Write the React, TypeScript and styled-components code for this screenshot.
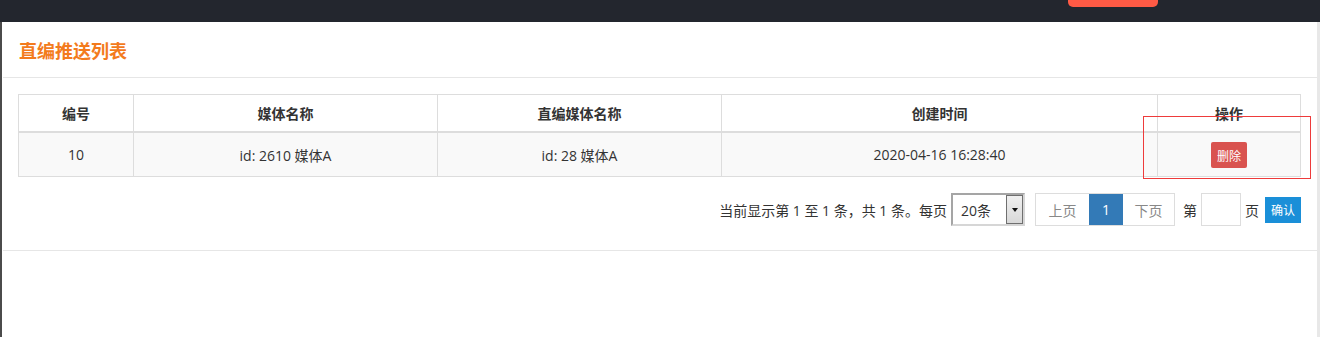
import styled, { createGlobalStyle } from "styled-components";

const GlobalStyle = createGlobalStyle`
  html, body {
    margin: 0;
    padding: 0;
    background: #fff;
  }
  body {
    font-family: "Open Sans", "Noto Sans CJK SC", sans-serif;
    color: #333;
  }
`;

const Page = styled.div`
  position: relative;
  width: 1320px;
  height: 337px;
  overflow: hidden;
  display: flex;
  flex-direction: column;
`;

const TopBar = styled.div`
  height: 22px;
  flex-shrink: 0;
  background: #23262e;
  display: flex;
  padding-left: 1068px;
  box-sizing: border-box;
`;

const TopTab = styled.div`
  width: 90px;
  height: 7px;
  background: #ff5a45;
  border-radius: 0 0 5px 5px;
`;

const Main = styled.div`
  flex: 1;
  display: flex;
  border-left: 2px solid #4b4b4b;
`;

const Panel = styled.div`
  flex: 1;
  padding-left: 1px;
  background: #fff;
`;

const ScrollStrip = styled.div`
  width: 4px;
  background: #e8e8e8;
`;

const PanelHeader = styled.div`
  height: 55px;
  display: flex;
  align-items: center;
  padding-left: 16px;
  border-bottom: 1px solid #e6e6e6;
`;

const Title = styled.h2`
  margin: 0;
  font-family: "Noto Sans CJK SC", sans-serif;
  font-size: 18px;
  font-weight: 700;
  color: #f37b1d;
  line-height: 1;
  margin-top: 1px;
`;

const PanelBody = styled.div`
  padding: 16px 16px 24px 15px;
  border-bottom: 1px solid #e6e6e6;
`;

const Table = styled.table`
  width: 100%;
  border-collapse: collapse;
  table-layout: fixed;
  border: 1px solid #ddd;
  font-size: 14px;
`;

const Th = styled.th`
  height: 36px;
  padding: 0 8px;
  border: 1px solid #ddd;
  border-bottom: 2px solid #ddd;
  font-weight: 700;
  font-family: "Noto Sans CJK SC", sans-serif;
  text-align: center;
  vertical-align: middle;
  color: #333;
`;

const Td = styled.td`
  height: 43px;
  padding: 0 8px;
  border: 1px solid #ddd;
  background: #f9f9f9;
  text-align: center;
  vertical-align: middle;
  color: #333;
`;

const DangerButton = styled.button`
  height: 26px;
  width: 36px;
  padding: 0;
  border: none;
  border-radius: 2px;
  background: #d9534f;
  color: #fff;
  font-size: 12px;
  font-family: "Noto Sans CJK SC", sans-serif;
  margin-top: 1px;
`;

const PagerRow = styled.div`
  margin-top: 16px;
  display: flex;
  justify-content: flex-end;
  align-items: center;
  height: 33px;
  font-size: 14px;
`;

const Info = styled.span`
  margin-right: 4px;
  color: #333;
`;

const SelectBox = styled.div`
  width: 74px;
  height: 33px;
  box-sizing: border-box;
  border: 2px solid #a5a5a5;
  border-right-color: #d6d6d6;
  border-bottom-color: #d6d6d6;
  display: flex;
  align-items: center;
  justify-content: space-between;
  padding-left: 8px;
  font-size: 14px;
  background: #fff;
`;

const SelectArrow = styled.div`
  width: 17px;
  height: 29px;
  box-sizing: border-box;
  border: 1px solid #6f6f6f;
  background: linear-gradient(#f0f0f0, #d8d8d8);
  display: flex;
  align-items: center;
  justify-content: center;
  &::after {
    content: "";
    border-left: 3px solid transparent;
    border-right: 3px solid transparent;
    border-top: 4px solid #111;
  }
`;

const PageList = styled.div`
  display: flex;
  margin-left: 10px;
  border: 1px solid #ddd;
  height: 33px;
  box-sizing: border-box;
`;

const PageItem = styled.span<{ $active?: boolean; $w: number }>`
  width: ${({ $w }) => $w}px;
  display: flex;
  align-items: center;
  justify-content: center;
  background: ${({ $active }) => ($active ? "#337ab7" : "#fff")};
  color: ${({ $active }) => ($active ? "#fff" : "#888")};
`;

const Label = styled.span<{ $tight?: boolean }>`
  margin: ${({ $tight }) => ($tight ? "0 0 0 4px" : "0 4px 0 8px")};
  color: #333;
`;

const PageInput = styled.div`
  width: 40px;
  height: 33px;
  box-sizing: border-box;
  border: 1px solid #ddd;
  background: #fff;
`;

const ConfirmButton = styled.button`
  margin-left: 6px;
  width: 36px;
  height: 26px;
  padding: 0;
  border: none;
  background: #1a8fd8;
  color: #fff;
  font-size: 12px;
  font-family: "Noto Sans CJK SC", sans-serif;
`;

const Highlight = styled.div`
  position: absolute;
  left: 1143px;
  top: 116px;
  width: 168px;
  height: 63px;
  box-sizing: border-box;
  border: 1px solid #ee3b3b;
  pointer-events: none;
`;

const columns = [
  { title: "编号", width: 115 },
  { title: "媒体名称", width: 304 },
  { title: "直编媒体名称", width: 284 },
  { title: "创建时间", width: 436 },
  { title: "操作", width: 143 },
];

const rows = [
  { id: 10, media: "id: 2610 媒体A", direct: "id: 28 媒体A", created: "2020-04-16 16:28:40" },
];

export default function App() {
  return (
    <Page>
      <GlobalStyle />
      <TopBar>
        <TopTab />
      </TopBar>
      <Main>
        <Panel>
          <PanelHeader>
            <Title>直编推送列表</Title>
          </PanelHeader>
          <PanelBody>
            <Table>
              <colgroup>
                {columns.map((c) => (
                  <col key={c.title} style={{ width: c.width }} />
                ))}
              </colgroup>
              <thead>
                <tr>
                  {columns.map((c) => (
                    <Th key={c.title}>{c.title}</Th>
                  ))}
                </tr>
              </thead>
              <tbody>
                {rows.map((r) => (
                  <tr key={r.id}>
                    <Td>{r.id}</Td>
                    <Td>{r.media}</Td>
                    <Td>{r.direct}</Td>
                    <Td>{r.created}</Td>
                    <Td>
                      <DangerButton>删除</DangerButton>
                    </Td>
                  </tr>
                ))}
              </tbody>
            </Table>
            <PagerRow>
              <Info>当前显示第 1 至 1 条，共 1 条。每页</Info>
              <SelectBox>
                20条
                <SelectArrow />
              </SelectBox>
              <PageList>
                <PageItem $w={53}>上页</PageItem>
                <PageItem $w={34} $active>
                  1
                </PageItem>
                <PageItem $w={51}>下页</PageItem>
              </PageList>
              <Label>第</Label>
              <PageInput />
              <Label $tight>页</Label>
              <ConfirmButton>确认</ConfirmButton>
            </PagerRow>
          </PanelBody>
        </Panel>
        <ScrollStrip />
      </Main>
      <Highlight />
    </Page>
  );
}
